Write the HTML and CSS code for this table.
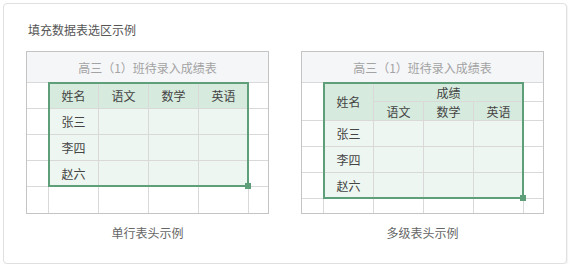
FILE: index.html
```html
<!DOCTYPE html>
<html lang="zh-CN">
<head>
<meta charset="utf-8">
<title>填充数据表选区示例</title>
<link rel="stylesheet" href="styles.css">
</head>
<body>
<div class="card">
  <div class="card-title">填充数据表选区示例</div>
  <div class="panels">
    <div class="panel">
      <div class="sheet sheet-single">
        <div class="c title">高三（1）班待录入成绩表</div>
        <div class="c"></div><div class="c hd">姓名</div><div class="c hd">语文</div><div class="c hd">数学</div><div class="c hd">英语</div><div class="c"></div>
        <div class="c"></div><div class="c bd">张三</div><div class="c bd"></div><div class="c bd"></div><div class="c bd"></div><div class="c"></div>
        <div class="c"></div><div class="c bd">李四</div><div class="c bd"></div><div class="c bd"></div><div class="c bd"></div><div class="c"></div>
        <div class="c"></div><div class="c bd">赵六</div><div class="c bd"></div><div class="c bd"></div><div class="c bd"></div><div class="c"></div>
        <div class="c"></div><div class="c"></div><div class="c"></div><div class="c"></div><div class="c"></div><div class="c"></div>
        <div class="selection sel-single"><span class="handle"></span></div>
      </div>
      <div class="caption">单行表头示例</div>
    </div>
    <div class="panel">
      <div class="sheet sheet-multi">
        <div class="c title">高三（1）班待录入成绩表</div>
        <div class="c span-r2"></div><div class="c hd span-r2">姓名</div><div class="c hd span-c3">成绩</div><div class="c"></div>
        <div class="c hd">语文</div><div class="c hd">数学</div><div class="c hd">英语</div><div class="c"></div>
        <div class="c"></div><div class="c bd">张三</div><div class="c bd"></div><div class="c bd"></div><div class="c bd"></div><div class="c"></div>
        <div class="c"></div><div class="c bd">李四</div><div class="c bd"></div><div class="c bd"></div><div class="c bd"></div><div class="c"></div>
        <div class="c"></div><div class="c bd">赵六</div><div class="c bd"></div><div class="c bd"></div><div class="c bd"></div><div class="c"></div>
        <div class="c"></div><div class="c"></div><div class="c"></div><div class="c"></div><div class="c"></div><div class="c"></div>
        <div class="selection sel-multi"><span class="handle"></span></div>
      </div>
      <div class="caption">多级表头示例</div>
    </div>
  </div>
</div>
</body>
</html>
```

FILE: styles.css
```css
html, body {
  margin: 0;
  padding: 0;
  background: #ffffff;
}

body {
  font-family: "Noto Sans CJK SC", "Noto Sans", "Liberation Sans", sans-serif;
  color: #444444;
}

.card {
  box-sizing: border-box;
  margin: 3px 0 0 3px;
  width: 564px;
  height: 261px;
  border: 1px solid #e0e0e0;
  border-radius: 4px;
  box-shadow: 1px 1px 1px rgba(0, 0, 0, 0.05);
  background: #ffffff;
  padding: 16px 0 0 22px;
}

.card-title {
  font-size: 12px;
  line-height: 20px;
  height: 20px;
  color: #555555;
  padding-left: 2px;
}

.panels {
  display: flex;
  gap: 32px;
  margin-top: 11px;
}

.panel {
  width: 243px;
  display: flex;
  flex-direction: column;
  align-items: stretch;
}

.sheet {
  position: relative;
  box-sizing: border-box;
  display: grid;
  grid-template-columns: 21px 49px 49px 49px 49px 19px;
  gap: 1px;
  background: #d9d9d9;
  border: 1px solid #c4c4c4;
  width: 243px;
  height: 163px;
}

.sheet-single {
  grid-template-rows: 30px 25px 25px 25px 25px 26px;
}

.sheet-multi {
  grid-template-rows: 30px 18px 18px 25px 25px 25px 14px;
}

.c {
  background: #ffffff;
  display: flex;
  align-items: center;
  justify-content: center;
  font-size: 12px;
  color: #444444;
}

.c.title {
  grid-column: 1 / -1;
  background: #f5f6f8;
  color: #a3a3a3;
  font-size: 12px;
}

.c.hd {
  background: #d6eadd;
}

.c.bd {
  background: #eef6f1;
}

.span-r2 {
  grid-row: span 2;
}

.span-c3 {
  grid-column: span 3;
}

.selection {
  position: absolute;
  box-sizing: border-box;
  left: 21px;
  top: 30px;
  width: 201px;
  border: 2px solid #5e9e78;
}

.sel-single {
  height: 105px;
}

.sel-multi {
  height: 117px;
}

.handle {
  position: absolute;
  right: -4px;
  bottom: -4px;
  width: 6px;
  height: 6px;
  background: #5e9e78;
}

.caption {
  margin-top: 9px;
  text-align: center;
  font-size: 12px;
  line-height: 20px;
  color: #666666;
}
```
